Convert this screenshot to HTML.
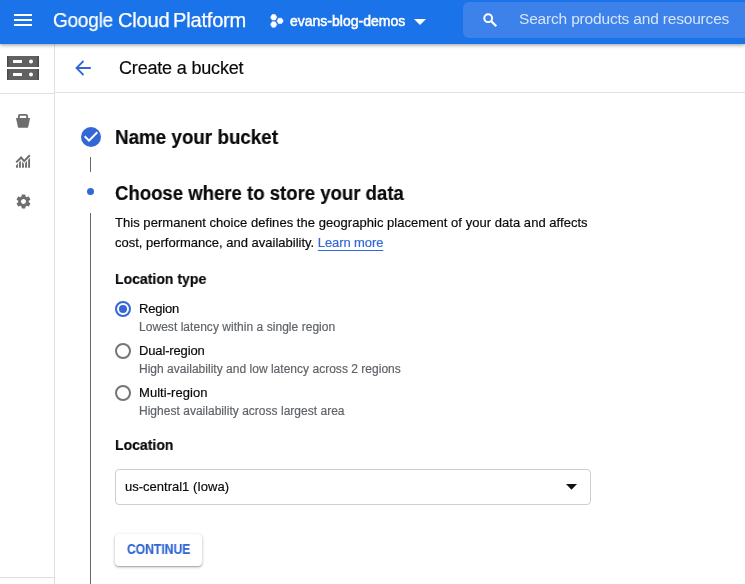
<!DOCTYPE html>
<html><head><meta charset="utf-8">
<style>
*{box-sizing:border-box;margin:0;padding:0}
html,body{width:745px;height:584px;overflow:hidden;background:#fff;font-family:"Liberation Sans",sans-serif;color:#0a0a0a}
.abs{position:absolute}
#hdr{position:absolute;left:0;top:0;width:745px;height:44px;background:#1a73e8;box-shadow:0 1px 4px rgba(0,0,0,.42);z-index:5}
#hdr .t{position:absolute;color:#fff;white-space:nowrap;will-change:transform}
#side{position:absolute;left:0;top:44px;width:55px;height:540px;border-right:1px solid #e0e0e0;background:#fff}
#sub{position:absolute;left:55px;top:44px;width:690px;height:49px;border-bottom:1px solid #e0e0e0;background:#fff}
.gt{font-size:19.5px;letter-spacing:-0.2px;transform-origin:0 0;-webkit-text-stroke:0.25px #fff}
.txt{position:absolute;white-space:nowrap;will-change:transform;-webkit-text-stroke:0.18px currentColor}
</style></head><body>
<div id="hdr">
  <svg class="abs" style="left:14px;top:14px" width="18" height="12" viewBox="0 0 18 12"><path d="M0 0h18v2H0zM0 5h18v2H0zM0 10h18v2H0z" fill="#fff"/></svg>
  <div class="t gt" style="left:53.100px;top:9px;transform:scaleX(0.972)">Google</div><div class="t gt" style="left:117.600px;top:9px;transform:scaleX(1.03)">Cloud</div><div class="t gt" style="left:173.200px;top:9px;transform:scaleX(1.03)">Platform</div>
  <svg class="abs" style="left:269px;top:13px" width="16" height="16" viewBox="269 13 16 16"><path d="M276.80 17.30L275.25 19.98L272.15 19.98L270.60 17.30L272.15 14.62L275.25 14.62zM276.80 24.50L275.25 27.18L272.15 27.18L270.60 24.50L272.15 21.82L275.25 21.82zM283.20 20.90L281.65 23.58L278.55 23.58L277.00 20.90L278.55 18.22L281.65 18.22z" fill="#fff" stroke="#fff" stroke-width="0.6" stroke-linejoin="round"/></svg>
  <div class="t" style="left:290px;top:13px;font-size:14px;-webkit-text-stroke:0.5px #fff;letter-spacing:0px">evans-blog-demos</div>
  <svg class="abs" style="left:414px;top:19px" width="12" height="6" viewBox="0 0 12 6"><path d="M0 0h12L6 6z" fill="#fff"/></svg>
  <div class="abs" style="left:463px;top:2px;width:290px;height:36px;background:#3c82ea;border-radius:6px"></div>
  <svg class="abs" style="left:482px;top:12px" width="16" height="16" viewBox="482 12 16 16"><circle cx="488.200" cy="18.200" r="3.900" fill="none" stroke="#fff" stroke-width="2"/><path d="M491.300 21.300L496.300 26.300" stroke="#fff" stroke-width="2.300"/></svg>
  <div class="t" style="left:519px;top:10px;font-size:15.5px;color:#d6e5fc;letter-spacing:-0.18px">Search products and resources</div>
</div>
<div id="side">
  <svg class="abs" style="left:7px;top:12px" width="32" height="24" viewBox="0 0 32 24"><rect x="0" y="0" width="32" height="11" fill="#616161"/><rect x="0" y="13" width="32" height="11" fill="#616161"/><rect x="0" y="0" width="1.500" height="11" fill="#4a4a4a"/><rect x="30.500" y="0" width="1.500" height="11" fill="#4a4a4a"/><rect x="0" y="13" width="1.500" height="11" fill="#4a4a4a"/><rect x="30.500" y="13" width="1.500" height="11" fill="#4a4a4a"/><rect x="6" y="4" width="9" height="3" fill="#fff"/><rect x="6" y="17" width="9" height="3" fill="#fff"/><circle cx="24" cy="5.500" r="2" fill="#fff"/><circle cx="24" cy="18.500" r="2" fill="#fff"/></svg>
  <div class="abs" style="left:0;top:49px;width:54px;height:1px;background:#e0e0e0"></div>
  <svg class="abs" style="left:15px;top:69px" width="17" height="16" viewBox="0 0 17 16"><path d="M1 5.100h14.100l-1.900 9a0.900 0.900 0 0 1-0.800 0.700H3.700a0.900 0.900 0 0 1-0.800-0.700z" fill="#6e6e6e"/><path d="M3.900 5.500V2.900a1 1 0 0 1 1-1h6.200a1 1 0 0 1 1 1v2.600" fill="none" stroke="#6e6e6e" stroke-width="1.900"/></svg>
  <svg class="abs" style="left:15px;top:109px" width="17" height="16" viewBox="0 0 17 16"><path d="M2 14.800v-9M4.900 14.800v-11M8 14.800v-9M11.100 14.800v-11M14.100 14.800v-13" stroke="#6e6e6e" stroke-width="1.900"/><path d="M0 0L0 8.400 1.200 8.400 6.100 3.500 9.200 7.100 14.800 1.200 17 0z" fill="#fff"/><path d="M-1 10.600L1.200 8.400l4.900-4.900 3.100 3.600 5.600-5.900 3-3" fill="none" stroke="#fff" stroke-width="5.400"/><path d="M1.200 9.400l4.900-4.900 3.100 3.600 5.600-5.900" fill="none" stroke="#6e6e6e" stroke-width="2"/></svg>
  <svg class="abs" style="left:14.500px;top:148.500px" width="17" height="17" viewBox="0 0 24 24"><path fill="#6e6e6e" d="M19.43 12.98c.04-.32.07-.64.07-.98s-.03-.66-.07-.98l2.11-1.65c.19-.15.24-.42.12-.64l-2-3.46c-.12-.22-.39-.3-.61-.22l-2.49 1c-.52-.4-1.08-.73-1.69-.98l-.38-2.65C14.46 2.18 14.25 2 14 2h-4c-.25 0-.46.18-.49.42l-.38 2.65c-.61.25-1.17.59-1.69.98l-2.49-1c-.23-.09-.49 0-.61.22l-2 3.46c-.13.22-.07.49.12.64l2.11 1.65c-.04.32-.07.65-.07.98s.03.66.07.98l-2.11 1.65c-.19.15-.24.42-.12.64l2 3.46c.12.22.39.3.61.22l2.49-1c.52.4 1.08.73 1.69.98l.38 2.65c.03.24.24.42.49.42h4c.25 0 .46-.18.49-.42l.38-2.65c.61-.25 1.17-.59 1.69-.98l2.49 1c.23.09.49 0 .61-.22l2-3.46c.12-.22.07-.49-.12-.64l-2.11-1.65zM12 15.5c-1.93 0-3.500-1.57-3.500-3.500s1.570-3.500 3.500-3.500 3.500 1.570 3.500 3.500-1.570 3.500-3.500 3.500z"/></svg>
  <div class="abs" style="left:0;top:533px;width:54px;height:1px;background:#e0e0e0"></div>
</div>
<div id="sub">
  <svg class="abs" style="left:20px;top:16px" width="17" height="16" viewBox="0 0 17 16"><path d="M8.500 1L1.500 8l7 7M1.500 8H15.800" fill="none" stroke="#3367d6" stroke-width="1.800"/></svg>
  <div class="txt" style="left:64px;top:14px;font-size:18px;letter-spacing:-0.18px">Create a bucket</div>
</div>
<!-- stepper -->
<svg class="abs" style="left:81px;top:127px" width="20" height="20" viewBox="0 0 20 20"><circle cx="10" cy="10" r="10" fill="#3367d6"/><path d="M8 15l-5-5 1.410-1.410L8 12.170l7.590-7.590L17 6z" fill="#fff"/></svg>
<div class="abs" style="left:90px;top:157px;width:1px;height:15px;background:#686868"></div>
<div class="abs" style="left:87px;top:188px;width:7px;height:7px;border-radius:50%;background:#3367d6"></div>
<div class="abs" style="left:90px;top:213px;width:1px;height:371px;background:#686868"></div>
<div class="txt" style="left:115px;top:126px;font-size:20px;font-weight:bold;transform:scaleX(0.94);transform-origin:0 0">Name your bucket</div>
<div class="txt" style="left:115px;top:182px;font-size:20px;font-weight:bold;transform:scaleX(0.928);transform-origin:0 0">Choose where to store your data</div>
<div class="txt" style="left:115px;top:215px;font-size:13px;letter-spacing:0.04px">This permanent choice defines the geographic placement of your data and affects</div>
<div class="txt" style="left:115px;top:235px;font-size:13px">cost, performance, and availability. <span style="color:#3367d6;text-decoration:underline;text-underline-offset:3.300px;text-decoration-thickness:1px;letter-spacing:-0.1px">Learn more</span></div>
<div class="txt" style="left:115px;top:269.6px;font-size:15.5px;font-weight:bold;transform:scaleX(0.905);transform-origin:0 0">Location type</div>
<!-- radios -->
<div class="abs" style="left:115px;top:301px;width:16px;height:16px;border-radius:50%;border:2px solid #3367d6"></div>
<div class="abs" style="left:119px;top:305px;width:8px;height:8px;border-radius:50%;background:#3367d6"></div>
<div class="txt" style="left:139px;top:301px;font-size:13px;letter-spacing:-0.2px">Region</div>
<div class="txt" style="left:139px;top:320px;font-size:12px;letter-spacing:0.04px;color:#5f6368">Lowest latency within a single region</div>
<div class="abs" style="left:115px;top:343px;width:16px;height:16px;border-radius:50%;border:2px solid #757575"></div>
<div class="txt" style="left:139px;top:343px;font-size:13px;letter-spacing:-0.15px">Dual-region</div>
<div class="txt" style="left:139px;top:362px;font-size:12px;letter-spacing:0.02px;color:#5f6368">High availability and low latency across 2 regions</div>
<div class="abs" style="left:115px;top:385px;width:16px;height:16px;border-radius:50%;border:2px solid #757575"></div>
<div class="txt" style="left:139px;top:385px;font-size:13px;letter-spacing:0.05px">Multi-region</div>
<div class="txt" style="left:139px;top:404px;font-size:12px;letter-spacing:0.02px;color:#5f6368">Highest availability across largest area</div>
<div class="txt" style="left:115px;top:435.6px;font-size:15.5px;font-weight:bold;transform:scaleX(0.905);transform-origin:0 0">Location</div>
<div class="abs" style="left:115px;top:469px;width:476px;height:36px;border:1px solid #cfcfcf;border-radius:4px"></div>
<div class="txt" style="left:125px;top:479px;font-size:13px">us-central1 (Iowa)</div>
<svg class="abs" style="left:566px;top:483.500px" width="11" height="6" viewBox="0 0 11 6"><path d="M0 0h11L5.500 5.800z" fill="#111"/></svg>
<div class="abs" style="left:115px;top:534px;width:87px;height:32px;border-radius:4px;background:#fff;box-shadow:0 1px 3px rgba(0,0,0,.3),0 1px 1px rgba(0,0,0,.15)"></div>
<div class="txt" style="left:127px;top:540.7px;font-size:14px;font-weight:bold;color:#3367d6;transform:scaleX(0.866);transform-origin:0 0">CONTINUE</div>
</body></html>
